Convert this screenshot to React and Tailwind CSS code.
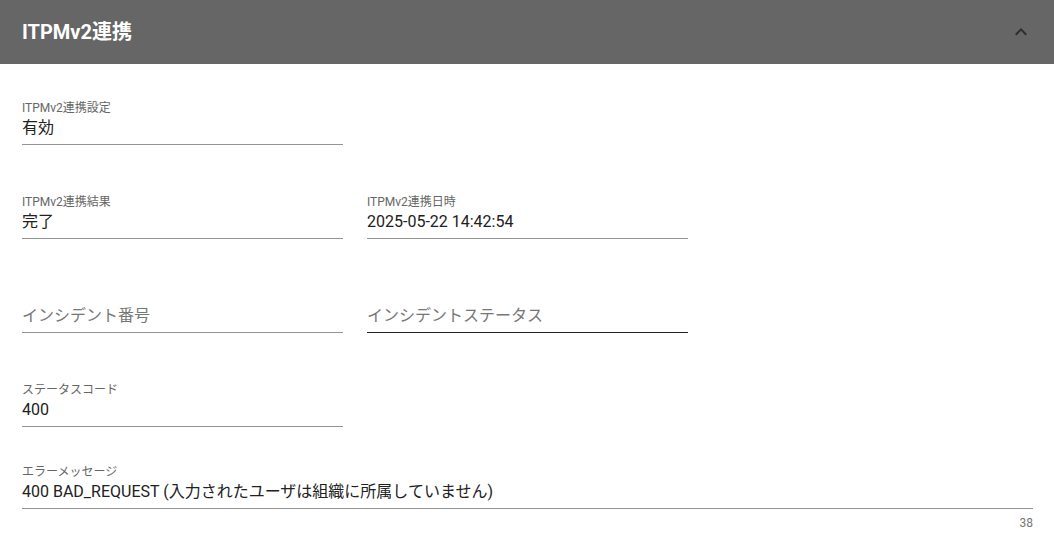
const Field = ({ label, value, placeholder, dark, className = '' }) => (
    <div className={`flex flex-col pt-[2px] ${className}`}>
        <div className="h-[14px] text-xs leading-[14px] text-[#666666]">{label}</div>
        <div
            className={`mt-[1px] pb-[4px] border-b ${dark ? 'border-[#222222]' : 'border-[#949494]'}`}
        >
            <div className={`h-6 text-base leading-6 ${value ? 'text-[#212121]' : 'text-[#777777]'}`}>
                {value || placeholder}
            </div>
        </div>
    </div>
);

export default function App() {
    return (
        <div className="w-[1054px] h-[549px] bg-white font-['Roboto','Noto_Sans_CJK_JP',sans-serif] overflow-hidden">
            {/* Header */}
            <div className="h-16 bg-[#666666] flex items-center justify-between pl-[22px] pr-[21px]">
                <h2 className="text-xl font-bold text-white tracking-normal">ITPMv2連携</h2>
                <svg viewBox="0 0 24 24" className="w-6 h-6 fill-[#2e2e2e]">
                    <path d="M12 8l-6 6 1.41 1.41L12 10.83l4.59 4.58L18 14z" />
                </svg>
            </div>

            {/* Body */}
            <div className="pt-[35px] pl-[22px] pr-[21px] flex flex-col">
                <div className="grid grid-cols-[321px_321px] gap-x-6">
                    <Field label="ITPMv2連携設定" value="有効" />
                </div>
                <div className="grid grid-cols-[321px_321px] gap-x-6 mt-12">
                    <Field label="ITPMv2連携結果" value="完了" />
                    <Field label="ITPMv2連携日時" value="2025-05-22 14:42:54" />
                </div>
                <div className="grid grid-cols-[321px_321px] gap-x-6 mt-12">
                    <Field placeholder="インシデント番号" />
                    <Field placeholder="インシデントステータス" dark />
                </div>
                <div className="grid grid-cols-[321px_321px] gap-x-6 mt-12">
                    <Field label="ステータスコード" value="400" />
                </div>
                <Field
                    className="mt-9"
                    label="エラーメッセージ"
                    value="400 BAD_REQUEST (入力されたユーザは組織に所属していません)"
                />
                <div className="mt-[7px] text-right text-xs leading-[14px] text-[#777777]">38</div>
            </div>
        </div>
    );
}
